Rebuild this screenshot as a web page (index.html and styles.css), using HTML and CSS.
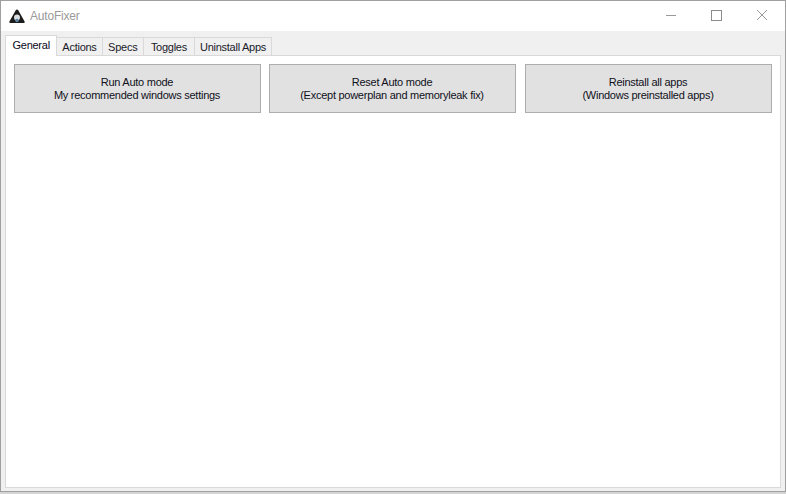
FILE: index.html
```html
<!DOCTYPE html>
<html lang="en">
<head>
<meta charset="utf-8">
<title>AutoFixer</title>
<link rel="stylesheet" href="styles.css">
</head>
<body>
<div class="window">
  <header class="titlebar">
    <svg class="logo" width="16" height="15" viewBox="0 0 16 15" aria-hidden="true">
      <path d="M8 0.5C8.6 0.5 9 1 9.4 1.6L15.6 12.6C16 13.4 15.6 14 14.8 14H1.2C0.4 14 0 13.4 0.4 12.6L6.6 1.6C7 1 7.4 0.5 8 0.5Z" fill="#1c1c1c"/>
      <circle cx="8" cy="8.5" r="3" fill="#d8dde2"/>
      <circle cx="8" cy="11.5" r="1.8" fill="#5b7f9e"/>
    </svg>
    <span class="apptitle">AutoFixer</span>
    <div class="controls">
      <svg class="ctl" width="46" height="30" viewBox="0 0 46 30" aria-hidden="true"><path d="M19 14.5H29" stroke="#9a9a9a" fill="none"/></svg>
      <svg class="ctl" width="46" height="30" viewBox="0 0 46 30" aria-hidden="true"><rect x="18.5" y="9.5" width="10" height="10" stroke="#8c8c8c" fill="none"/></svg>
      <svg class="ctl" width="46" height="30" viewBox="0 0 46 30" aria-hidden="true"><path d="M18 9L28 19M28 9L18 19" stroke="#9a9a9a" fill="none"/></svg>
    </div>
  </header>
  <main class="client">
    <nav class="tabs">
      <div class="tab active">General</div>
      <div class="tab">Actions</div>
      <div class="tab tab-specs">Specs</div>
      <div class="tab tab-toggles">Toggles</div>
      <div class="tab">Uninstall Apps</div>
    </nav>
    <section class="panel">
      <button class="action">Run Auto mode<br>My recommended windows settings</button>
      <button class="action">Reset Auto mode<br>(Except powerplan and memoryleak fix)</button>
      <button class="action action-last">Reinstall all apps<br>(Windows preinstalled apps)</button>
    </section>
  </main>
</div>
</body>
</html>
```
FILE: styles.css
```css
* { box-sizing: border-box; }
html, body { margin: 0; padding: 0; background: #d4d4d4; }
body { width: 786px; height: 494px; overflow: hidden; font-family: "Liberation Sans", Arial, sans-serif; }
.window {
  width: 786px; height: 492px;
  border: 1px solid #9f9f9f;
  display: flex; flex-direction: column;
  background: #f0f0f0;
}
.titlebar {
  height: 30px; background: #fff; flex: none;
  display: flex; align-items: center;
  padding-left: 8px;
}
.logo { flex: none; }
.apptitle { margin-left: 5px; font-size: 12px; color: #9a9a9a; letter-spacing: -0.2px; }
.controls { margin-left: auto; display: flex; }
.ctl { display: block; }
.client { flex: 1; display: flex; flex-direction: column; padding: 4px 4px 3px 4px; min-height: 0; }
.tabs { display: flex; height: 20px; flex: none; position: relative; z-index: 1; align-items: flex-end; }
.tab {
  height: 18px; padding: 0 5px;
  border: 1px solid #d9d9d9; border-left-width: 0; border-bottom: 0;
  font-size: 11px; letter-spacing: -0.26px; line-height: 18px; color: #1a1a2a; background: #f0f0f0;
}
.tab-specs { padding: 0 5.5px; }
.tab-toggles { padding: 0 7px; }
.tab.active {
  height: 21px; margin-bottom: -1px; background: #fff; padding: 0 6.5px;
  border-left-width: 1px; line-height: 19px; color: #0a0a1a;
}
.panel {
  flex: 1; width: 776px;
  background: #fff; border: 1px solid #d9d9d9;
  display: flex; gap: 8px; align-items: flex-start;
  padding: 8px;
}
.action {
  width: 247px; height: 49px; padding: 0 1px 0 0;
  background: #e1e1e1; border: 1px solid #adadad; border-radius: 0;
  font-family: inherit; font-size: 11px; letter-spacing: -0.26px; line-height: 13px; color: #10101a;
  text-align: center;
}
.action-last { margin-left: 1px; }
```
